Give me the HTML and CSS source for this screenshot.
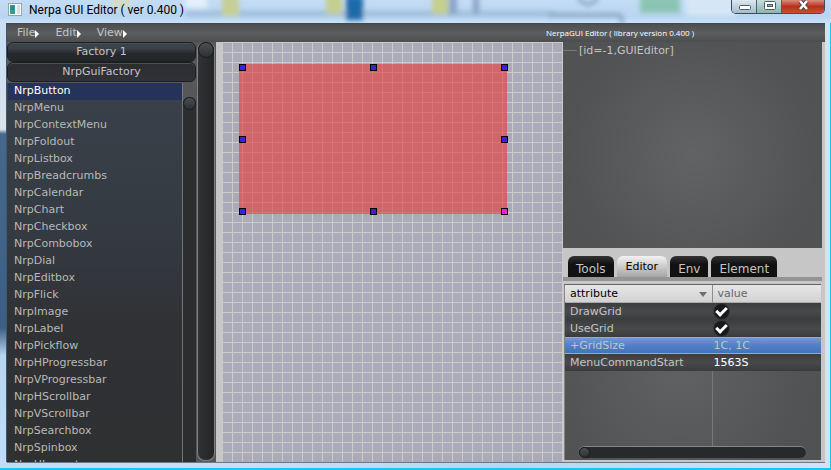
FILE: index.html
```html
<!DOCTYPE html>
<html lang="en">
<head>
<meta charset="utf-8">
<title>Nerpa GUI Editor</title>
<link rel="stylesheet" href="styles.css">
</head>
<body>
<header class="titlebar">
  <svg class="backdrop" viewBox="0 0 831 23" preserveAspectRatio="none" aria-hidden="true">
    <defs><filter id="soft" x="-20%" y="-50%" width="140%" height="200%"><feGaussianBlur stdDeviation="2.5"/></filter></defs>
    <g filter="url(#soft)">
      <rect x="186" y="11" width="370" height="5" fill="#9dbbd9"/>
      <rect x="185" y="-4" width="22" height="12" fill="#e4f0fb"/>
      <rect x="112" y="-4" width="18" height="12" fill="#d3dcc8"/>
      <rect x="222" y="-4" width="17" height="20" fill="#c5cf96"/>
      <rect x="326" y="-4" width="16" height="18" fill="#c5cf8e"/>
      <rect x="346" y="-4" width="17" height="24" fill="#1f6aa8"/>
      <rect x="432" y="-4" width="16" height="18" fill="#c5cf8e"/>
      <rect x="449" y="-4" width="8" height="18" fill="#88a4c6"/>
      <rect x="473" y="-4" width="6" height="18" fill="#88a4c6"/>
      <path d="M548 15H618Q623 15 622 24M578 -2Q588 10 598 -2" fill="none" stroke="#8ba6c4" stroke-width="4"/>
      <rect x="640" y="-4" width="40" height="17" fill="#8cc4b4"/>
      <rect x="686" y="-4" width="50" height="20" fill="#d5e7f7"/>
    </g>
  </svg>
  <svg class="app-icon" viewBox="0 0 14 13" aria-hidden="true">
    <rect x=".5" y=".5" width="13" height="12" fill="#f4f7f7" stroke="#9aa5aa"/>
    <rect x="2" y="2" width="5" height="9" fill="#3f9a86"/>
    <rect x="3" y="3" width="3" height="4" fill="#357bb0"/>
    <rect x="9" y="2" width="3" height="9" fill="#d6e0e0"/>
  </svg>
  <h1 class="title">Nerpa GUI Editor ( ver 0.400 )</h1>
  <div class="window-buttons">
    <button class="win-btn" aria-label="Minimize"><svg viewBox="0 0 13 13"><rect x="1.5" y="5.5" width="11" height="4" rx="1" fill="#fff" stroke="#4d5a66"/></svg></button>
    <button class="win-btn win-max" aria-label="Maximize"><svg viewBox="0 0 13 13"><rect x="1.5" y="1.5" width="11" height="8" rx="1" fill="#fff" stroke="#4d5a66"/><rect x="4.5" y="4.5" width="5" height="2" fill="#8bb5ad" stroke="#4d5a66"/></svg></button>
    <button class="win-btn win-close" aria-label="Close"><svg viewBox="0 0 13 13"><path d="M3 1L10 9M10 1L3 9" stroke="#5a4048" stroke-width="4.5"/><path d="M3 1L10 9M10 1L3 9" stroke="#fff" stroke-width="2.5"/></svg></button>
  </div>
</header>
<main class="client">
  <nav class="menubar">
    <button class="menu">File</button>
    <button class="menu">Edit</button>
    <button class="menu">View</button>
    <span class="version">NerpaGUI Editor ( library version 0.400 )</span>
  </nav>
  <div class="workspace">
    <aside class="factory">
      <button class="fold fold-top">Factory 1</button>
      <button class="fold">NrpGuiFactory</button>
      <div class="listbox">
        <ul class="items">
          <li><button class="item selected">NrpButton</button></li>
          <li><button class="item">NrpMenu</button></li>
          <li><button class="item">NrpContextMenu</button></li>
          <li><button class="item">NrpFoldout</button></li>
          <li><button class="item">NrpListbox</button></li>
          <li><button class="item">NrpBreadcrumbs</button></li>
          <li><button class="item">NrpCalendar</button></li>
          <li><button class="item">NrpChart</button></li>
          <li><button class="item">NrpCheckbox</button></li>
          <li><button class="item">NrpCombobox</button></li>
          <li><button class="item">NrpDial</button></li>
          <li><button class="item">NrpEditbox</button></li>
          <li><button class="item">NrpFlick</button></li>
          <li><button class="item">NrpImage</button></li>
          <li><button class="item">NrpLabel</button></li>
          <li><button class="item">NrpPickflow</button></li>
          <li><button class="item">NrpHProgressbar</button></li>
          <li><button class="item">NrpVProgressbar</button></li>
          <li><button class="item">NrpHScrollbar</button></li>
          <li><button class="item">NrpVScrollbar</button></li>
          <li><button class="item">NrpSearchbox</button></li>
          <li><button class="item">NrpSpinbox</button></li>
          <li><button class="item">NrpHLayout</button></li>
        </ul>
        <div class="list-scroll"><span class="knob"></span></div>
      </div>
    </aside>
    <div class="main-scroll"><span class="knob"></span></div>
    <section class="canvas">
      <div class="grid">
        <div class="widget">
          <i class="handle n w"></i><i class="handle n c"></i><i class="handle n e"></i>
          <i class="handle m w"></i><i class="handle m e"></i>
          <i class="handle s w"></i><i class="handle s c"></i><i class="handle s e active"></i>
        </div>
      </div>
    </section>
    <aside class="inspector">
      <div class="tree"><span class="node">[id=-1,GUIEditor]</span></div>
      <div class="tabs">
        <button class="tab">Tools</button>
        <button class="tab current">Editor</button>
        <button class="tab">Env</button>
        <button class="tab">Element</button>
      </div>
      <div class="properties">
        <table class="attributes">
          <thead><tr><th class="name">attribute<span class="sort"></span></th><th class="value">value</th></tr></thead>
          <tbody>
            <tr><td><label for="draw-grid">DrawGrid</label></td><td><input type="checkbox" id="draw-grid" checked></td></tr>
            <tr><td><label for="use-grid">UseGrid</label></td><td><input type="checkbox" id="use-grid" checked></td></tr>
            <tr class="picked"><td>+GridSize</td><td>1C, 1C</td></tr>
            <tr><td>MenuCommandStart</td><td class="number">1563S</td></tr>
          </tbody>
        </table>
        <div class="column-rule"></div>
        <div class="h-scroll"><span class="knob"></span></div>
      </div>
    </aside>
  </div>
</main>
</body>
</html>
```
FILE: styles.css
```css
*, *::before, *::after { box-sizing: border-box; }

body {
  margin: 0;
  height: 100vh;
  overflow: hidden;
  display: flex;
  flex-direction: column;
  padding: 0 6px 8px 7px;
  font: 11px/17px "DejaVu Sans", sans-serif;
  color: #c4c4c4;
  background:
    linear-gradient(#c9def5 8%, #dbe2ea 28%, #46688a 29%, #3b5f85 71%, #b8d4f0 77%, #c0dcf8) 0 0 / 7px calc(100% - 8px) no-repeat,
    linear-gradient(90deg, #c0dcf8, #c9def5 30%, #b4d6f8 60%, #cfe4fa);
  box-shadow: inset -1px -2px 0 #14c8f0;
}

button {
  margin: 0;
  padding: 0;
  border: 0;
  background: none;
  color: inherit;
  font: inherit;
}

.titlebar {
  position: relative;
  flex: none;
  height: 23px;
  margin: 0 -6px 0 -7px;
  padding: 0 6px 0 8px;
  display: flex;
  align-items: flex-start;
  gap: 7px;
  background: linear-gradient(#c4ddf6, #b9d5f0 70%, #c9e2f8);
}

.backdrop {
  position: absolute;
  inset: 0;
  width: 100%;
  height: 100%;
}

.app-icon {
  position: relative;
  width: 14px;
  height: 13px;
  margin-top: 3px;
}

.title {
  position: relative;
  flex: 1;
  margin: 0;
  font: 12px/20px Roboto, sans-serif;
  color: #000;
}

.window-buttons {
  position: relative;
  display: flex;
  height: 14px;
  border: 1px solid #3d4d5c;
  border-top: 0;
  border-radius: 0 0 5px 5px;
  overflow: hidden;
}

.win-btn {
  width: 25px;
  border-right: 1px solid #4d6070;
  background: linear-gradient(#dbe8f0, #a3bccb);
  line-height: 0;
}

.win-btn svg { width: 13px; height: 13px; }
.win-max { background: linear-gradient(#c6ded9, #8bb5ad); }
.win-close { width: 42px; border: 0; background: linear-gradient(#d98c7c, #b8301c 50%, #c85038); }

.client {
  flex: 1;
  min-height: 0;
  display: flex;
  flex-direction: column;
  background: #565759;
  border-top: 1px solid #45484a;
  box-shadow: -1px 0 0 #3f5870, 0 1px 0 #6c7884;
}

.menubar {
  flex: none;
  display: flex;
  align-items: center;
  height: 18px;
  padding: 0 131px 0 10px;
  gap: 16px;
  background: linear-gradient(#4d4e50, #5c5d5f 50%, #4c4d4f);
}

.menu {
  display: flex;
  align-items: center;
  line-height: 16px;
}

.menu::after {
  content: "";
  border: 4px solid transparent;
  border-left: 4px solid #fff;
  border-right: 0;
  margin-top: 1px;
}

.version {
  margin-left: auto;
  font: 8px/16px "Open Sans", sans-serif;
  color: #fff;
}

.workspace {
  flex: 1;
  min-height: 0;
  display: grid;
  grid-template-columns: 189px 20px minmax(0, 347fr) minmax(0, 262fr);
}

.factory {
  min-height: 0;
  display: flex;
  flex-direction: column;
}

.fold {
  flex: none;
  height: 20px;
  border: 1px solid #1c1e20;
  border-radius: 6px;
  background: linear-gradient(#2b2d31, #303237);
  box-shadow: inset 0 1px 0 #4b4e52;
  line-height: 16px;
}

.fold-top { background: linear-gradient(#3a424b 30%, #25282b 60%); }

.listbox {
  flex: 1;
  min-height: 0;
  display: flex;
  margin-top: 1px;
}

.items {
  flex: 1;
  margin: 0;
  padding: 0 0 0 1px;
  list-style: none;
  overflow: hidden;
  background: linear-gradient(#3a414a, #343a42 40%, #303134 65%, #2f3032);
  border-right: 1px solid #737577;
}

.item {
  display: flex;
  width: 100%;
  height: 17px;
  padding-left: 6px;
  line-height: 15px;
  color: #b8b8b8;
}

.item.selected { background: #25325a; color: #fff; }

.list-scroll {
  width: 13px;
  margin-top: 14px;
  border-radius: 6px 6px 0 0;
  background: #2b2d2e;
}

.knob {
  display: block;
  width: 100%;
  aspect-ratio: 1;
  border: 1px solid #1b1c1d;
  border-radius: 50%;
  background: linear-gradient(#4b4f53, #2d3033);
}

.main-scroll {
  margin: 0 1px 1px 1px;
  border: 1px solid #808284;
  border-top: 0;
  border-radius: 8px;
  background: linear-gradient(90deg, #303235, #232527);
}

.canvas {
  padding-left: 6px;
  background: #c6c6c6;
}

.grid {
  position: relative;
  height: 100%;
  overflow: hidden;
  background:
    linear-gradient(#cbcbc7 1px, transparent 1px) 0 0 / 10px 10px,
    linear-gradient(90deg, #cbcbc7 1px, transparent 1px) 0 0 / 10px 10px,
    #aaaab8;
}

.widget {
  position: absolute;
  left: 17px;
  top: 22px;
  width: 268px;
  height: 150px;
  background: rgba(235, 46, 46, .55);
}

.handle {
  position: absolute;
  width: 7px;
  height: 7px;
  border: 1px solid #000;
  background: #3a20d8;
}

.n { top: 0; }
.m { top: 72px; }
.s { bottom: -1px; }
.w { left: 0; }
.c { left: 131px; }
.e { right: -1px; }
.active { background: #f020d8; }

.inspector {
  display: flex;
  flex-direction: column;
  padding-right: 3px;
  background: #c6c6c6;
}

.tree {
  flex: 207;
  background: radial-gradient(circle at 50% 55%, #626365, #515254 75%);
}

.node { display: flex; align-items: center; gap: 2px; }

.node::before {
  content: "";
  width: 14px;
  border-top: 1px solid #77787a;
}

.tabs {
  flex: none;
  display: flex;
  gap: 3px;
  padding: 8px 5px 0;
  height: 33px;
  border-bottom: 4px solid #949494;
}

.tab {
  padding: 6px 8px 0;
  border-radius: 6px 6px 0 0;
  background: linear-gradient(#333, #111 40%);
  font-size: 12px;
  line-height: 15px;
}

.tab.current {
  padding: 0 9px;
  color: #000;
  background: linear-gradient(#f2f2f2, #a5a5a5);
  font-size: 11px;
}

.properties {
  flex: 176;
  min-height: 0;
  display: flex;
  flex-direction: column;
  margin: 3px 1px 2px 1px;
  border-top: 1px solid #626262;
  border-left: 1px solid #86878a;
  background: radial-gradient(circle at 45% 50%, #606163, #515254 80%);
}

.attributes {
  width: 100%;
  border-spacing: 0;
  table-layout: fixed;
}

.attributes th,
.attributes td {
  height: 17px;
  padding: 0 5px;
  text-align: left;
  font-weight: normal;
  line-height: 15px;
}

.attributes th {
  height: 18px;
  background: linear-gradient(#e6e6e6, #d2d2d2);
  color: #666;
  border-bottom: 1px solid #aaa;
}

.attributes .name {
  width: 58%;
  color: #000;
  border-right: 1px solid #8e8e8e;
}

.attributes .value { padding-left: 4px; }

.sort {
  float: right;
  margin-top: 6px;
  border: 4px solid transparent;
  border-top: 5px solid #707070;
  border-bottom: 0;
}

.attributes td {
  background: linear-gradient(#3c3d3f, #48494b 50%, #3a3b3d);
}

.attributes td + td { padding: 0; }

.attributes .picked td {
  background: linear-gradient(#7497d0, #5280c6 50%, #4273bd);
  border-top: 1px solid #b0a99a;
  border-bottom: 1px solid #b0a99a;
}

.attributes .number { color: #fff; }

.attributes input {
  display: block;
  appearance: none;
  width: 17px;
  height: 17px;
  margin: 0;
  border: 1px solid #38393b;
  border-radius: 50%;
  background: #17191b;
}

.attributes input::before {
  content: "";
  display: block;
  width: 11px;
  height: 7px;
  margin: 3px 2px;
  border: solid #fff;
  border-width: 0 0 3px 3px;
  transform: rotate(-45deg);
}

.column-rule {
  flex: 1;
  width: 58%;
  border-right: 1px solid #77787a;
}

.h-scroll {
  flex: none;
  height: 12px;
  margin: 0 15px 2px 14px;
  border-top: 1px solid #858688;
  border-radius: 6px;
  background: #272a2c;
}

.h-scroll .knob { width: 11px; }
```
